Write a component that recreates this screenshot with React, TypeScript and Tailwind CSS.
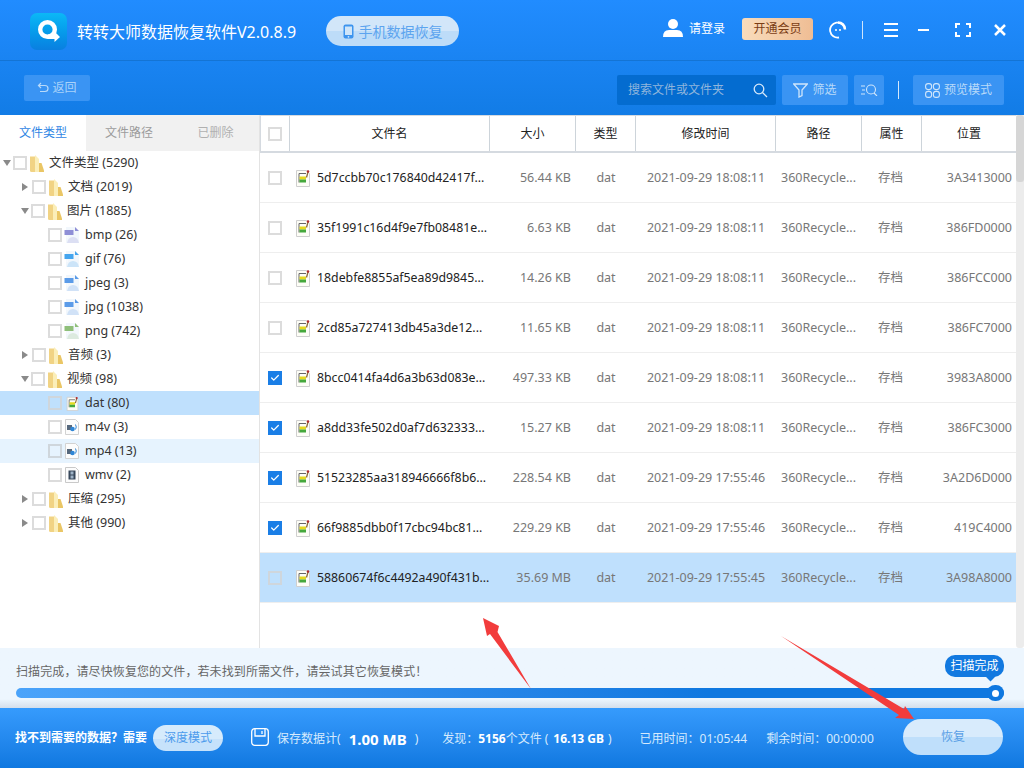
import { Check } from "lucide-react";

const SANS = "font-['Noto_Sans','Noto_Sans_CJK_SC',sans-serif]";

type TreeRow = {
  label: string;
  indent: number;
  kind: "folder" | "image" | "dat" | "video" | "film";
  open?: boolean;
  leaf?: boolean;
  tint?: string;
  row?: string;
};

const tree: TreeRow[] = [
  { label: "文件类型 (5290)", indent: 3, kind: "folder", open: true },
  { label: "文档 (2019)", indent: 21, kind: "folder" },
  { label: "图片 (1885)", indent: 21, kind: "folder", open: true },
  { label: "bmp (26)", indent: 48, kind: "image", leaf: true, tint: "#8f8fd6" },
  { label: "gif (76)", indent: 48, kind: "image", leaf: true, tint: "#45a5ee" },
  { label: "jpeg (3)", indent: 48, kind: "image", leaf: true, tint: "#5b9be8" },
  { label: "jpg (1038)", indent: 48, kind: "image", leaf: true, tint: "#5b9be8" },
  { label: "png (742)", indent: 48, kind: "image", leaf: true, tint: "#8fbf7a" },
  { label: "音频 (3)", indent: 21, kind: "folder" },
  { label: "视频 (98)", indent: 21, kind: "folder", open: true },
  { label: "dat (80)", indent: 48, kind: "dat", leaf: true, row: "bg-[#bfe0fd]" },
  { label: "m4v (3)", indent: 48, kind: "video", leaf: true },
  { label: "mp4 (13)", indent: 48, kind: "video", leaf: true, row: "bg-[#e6f3fe]" },
  { label: "wmv (2)", indent: 48, kind: "film", leaf: true },
  { label: "压缩 (295)", indent: 21, kind: "folder" },
  { label: "其他 (990)", indent: 21, kind: "folder" },
];

const files = [
  ["5d7ccbb70c176840d42417f...", "56.44 KB", "2021-09-29 18:08:11", "3A3413000", false],
  ["35f1991c16d4f9e7fb08481e...", "6.63 KB", "2021-09-29 18:08:11", "386FD0000", false],
  ["18debfe8855af5ea89d9845...", "14.26 KB", "2021-09-29 18:08:11", "386FCC000", false],
  ["2cd85a727413db45a3de12...", "11.65 KB", "2021-09-29 18:08:11", "386FC7000", false],
  ["8bcc0414fa4d6a3b63d083e...", "497.33 KB", "2021-09-29 18:08:11", "3983A8000", true],
  ["a8dd33fe502d0af7d632333...", "15.27 KB", "2021-09-29 18:08:11", "386FC3000", true],
  ["51523285aa318946666f8b6...", "228.54 KB", "2021-09-29 17:55:46", "3A2D6D000", true],
  ["66f9885dbb0f17cbc94bc81...", "229.29 KB", "2021-09-29 17:55:46", "419C4000", true],
  ["58860674f6c4492a490f431b...", "35.69 MB", "2021-09-29 17:55:45", "3A98A8000", false],
] as const;

function Box({ checked, dim }: { checked?: boolean; dim?: boolean }) {
  if (checked) {
    return (
      <span className="flex h-[14px] w-[14px] flex-shrink-0 items-center justify-center bg-[#1a7ee6]">
        <Check size={10} strokeWidth={3} className="text-white" />
      </span>
    );
  }
  return (
    <span
      className={`block h-[14px] w-[14px] flex-shrink-0 border-2 ${dim ? "border-[#cfd6dc] bg-transparent" : "border-[#dcdcdc] bg-white"}`}
    />
  );
}

function Folder() {
  return (
    <svg width="14" height="17" viewBox="0 0 14 17" className="flex-shrink-0">
      <path d="M0 1.500h5V17H1.500Q0 17 0 15.500Z" fill="#f1d384" />
      <path d="M5 0l4 4v13H5Z" fill="#fbeeb8" />
      <path d="M9 8h2.500L14 15.500V17H9Z" fill="#eac665" />
    </svg>
  );
}

function ImageFile({ tint }: { tint: string }) {
  return (
    <svg width="16" height="16" viewBox="0 0 16 16" className="flex-shrink-0">
      <path d="M2 0h9l4 4v12H2Z" fill="#f2f7fc" />
      <path d="M11 0l4 4h-4Z" fill={tint} />
      <rect x="0.500" y="3" width="9" height="5" fill={tint} />
      <path d="M2.500 9.500h1.500v1h-1.500Z" fill="#fff" />
      <path d="M3 16q1-6 6-6t6 6Z" fill={tint} opacity=".22" />
    </svg>
  );
}

function DatFile({ small }: { small?: boolean }) {
  return (
    <svg
      width={small ? 13 : 14}
      height={small ? 15 : 18}
      viewBox="0 0 14 18"
      className="flex-shrink-0"
    >
      <path d="M.500 1.500h10l3 3v13H.500Z" fill="#fdfdf6" stroke="#cfcfcf" />
      <path d="M3 4.500h7M3 4.500v9" stroke="#666" fill="none" />
      <rect x="3.500" y="7.500" width="6.500" height="3" fill="#e5da1f" />
      <rect x="3.500" y="10.500" width="6.500" height="3" fill="#45a83c" />
      <path d="M10.500 8.500L12 3" stroke="#8c6a3a" strokeWidth="1.300" />
      <circle cx="12" cy="2.500" r="1.300" fill="#b32a2a" />
    </svg>
  );
}

function VideoFile() {
  return (
    <svg width="14" height="16" viewBox="0 0 14 16" className="flex-shrink-0">
      <path d="M.500.500h10l3 3v12H.500Z" fill="#fcfcfc" stroke="#d2d2d2" />
      <rect x="2" y="6" width="5" height="5" fill="#56687c" />
      <circle cx="7.500" cy="10" r="2.300" fill="#2f86d6" />
      <path d="M10.500 5.500q1.500 2.500 0 5" stroke="#2f86d6" fill="none" />
    </svg>
  );
}

function FilmFile() {
  return (
    <svg width="14" height="16" viewBox="0 0 14 16" className="flex-shrink-0">
      <path d="M.500.500h10l3 3v12H.500Z" fill="#fcfcfc" stroke="#c9c9c9" />
      <rect x="3.500" y="3.500" width="7" height="9" fill="#37475a" />
      <rect x="5.500" y="4.500" width="3" height="3" fill="#9fb4c8" />
      <rect x="5.500" y="8.500" width="3" height="3" fill="#9fb4c8" />
    </svg>
  );
}

function RowIcon({ row }: { row: TreeRow }) {
  if (row.kind === "folder") return <Folder />;
  if (row.kind === "image") return <ImageFile tint={row.tint ?? "#5b9be8"} />;
  if (row.kind === "dat") return <DatFile small />;
  if (row.kind === "video") return <VideoFile />;
  return <FilmFile />;
}

function Logo() {
  return (
    <span className="mt-[2px] flex h-[37px] w-[37px] flex-shrink-0 items-center justify-center rounded-[7px] bg-gradient-to-b from-[#0cb8f6] to-[#0a7fe0]">
      <svg width="24" height="24" viewBox="0 0 24 24">
        <circle cx="10.500" cy="10.500" r="7.300" fill="none" stroke="#fff" strokeWidth="4.400" />
        <path d="M11 15.500h6.500V12.500L23 18l-5.500 5v-3H11Z" fill="#fff" />
      </svg>
    </span>
  );
}

function TitleBar() {
  return (
    <div className="flex h-[61px] items-center border-b border-b-[#1474d4] pl-[30px] pr-[18px]">
      <Logo />
      <span className="ml-[10px] mt-[4px] text-[16px] text-white">转转大师数据恢复软件V2.0.8.9</span>
      <span className="ml-[30px] mt-[2px] flex h-[30px] w-[133px] items-center justify-center gap-[5px] rounded-full bg-[linear-gradient(#d2e6f9_50%,#bddcf8_50%)] text-[14px] text-[#5ca4ef]">
        <svg width="11" height="15" viewBox="0 0 11 15">
          <rect x="0.500" y="0.500" width="10" height="14" rx="2" fill="#3d94ee" />
          <rect x="2" y="2.500" width="7" height="8.500" fill="#cfe5f9" />
          <circle cx="5.500" cy="12.800" r="0.900" fill="#cfe5f9" />
        </svg>
        手机数据恢复
      </span>
      <span className="flex-1" />
      <svg width="20" height="18" viewBox="0 0 20 18" className="mt-[-5px]">
        <circle cx="10" cy="5" r="5" fill="#fff" />
        <path d="M0 18q0-7 6-7h8q6 0 6 7Z" fill="#fff" />
      </svg>
      <span className="ml-[6px] mt-[-2px] text-[12px] text-white">请登录</span>
      <span className="ml-[17px] mt-[-2px] flex h-[22px] w-[71px] items-center justify-center rounded-[3px] bg-gradient-to-r from-[#f9dcbc] to-[#efbd94] text-[12px] text-[#7a3c14]">
        开通会员
      </span>
      <svg width="18" height="18" viewBox="0 0 18 18" fill="none" className="ml-[16px]">
        <path d="M16 8A7.500 7.500 0 1 0 10 16.500" stroke="#fff" strokeWidth="1.800" />
        <path d="M9 1.500c4 0 7 3 7 7" stroke="#fff" strokeWidth="2.500" />
        <circle cx="7" cy="9" r="1" fill="#fff" />
        <circle cx="11" cy="9" r="1" fill="#fff" />
      </svg>
      <span className="ml-[15px] h-[18px] w-px bg-[#cfe5fb]" />
      <span className="ml-[21px] flex w-[14px] flex-col gap-[4px]">
        <span className="h-[2px] bg-white" />
        <span className="h-[2px] bg-white" />
        <span className="h-[2px] bg-white" />
      </span>
      <span className="ml-[20px] h-[2px] w-[11px] bg-white" />
      <svg width="16" height="14" viewBox="0 0 16 14" fill="none" stroke="#fff" strokeWidth="2" className="ml-[26px]">
        <path d="M1 5V1h4M11 1h4v4M15 9v4h-4M5 13H1V9" />
      </svg>
      <svg width="12" height="12" viewBox="0 0 12 12" stroke="#fff" strokeWidth="2.500" className="ml-[23px]">
        <path d="M1 1l10 10M11 1L1 11" />
      </svg>
    </div>
  );
}

function Toolbar() {
  return (
    <div className="flex h-[54px] items-start pl-[24px] pr-[20px] pt-[14px]">
      <span className="flex h-[26px] w-[66px] items-center justify-center gap-[3px] rounded-[2px] bg-[#3a94f3] text-[12px] text-[#a9d2fa]">
        <svg width="12" height="12" viewBox="0 0 12 12" fill="none" stroke="#b9daf9" strokeWidth="1.200">
          <path d="M4 1L1.500 3.500 4 6M2 3.500h6a3 3 0 0 1 0 6H3" />
        </svg>
        返回
      </span>
      <span className="flex-1" />
      <span className="flex h-[30px] w-[159px] items-center justify-between rounded-[2px] bg-[#046cd0] pl-[11px] pr-[8px] text-[12px] text-[#8fb5dc]">
        搜索文件或文件夹
        <svg width="15" height="15" viewBox="0 0 15 15" fill="none" stroke="#d7e9fb" strokeWidth="1.300">
          <circle cx="6" cy="6" r="4.800" />
          <path d="M9.500 9.500L14 14" />
        </svg>
      </span>
      <span className="ml-[6px] flex h-[30px] w-[66px] items-center justify-center gap-[4px] rounded-[2px] bg-[#3a94f3] text-[12px] text-[#b9daf9]">
        <svg width="15" height="15" viewBox="0 0 15 15" fill="none" stroke="#cfe5fb" strokeWidth="1.300">
          <path d="M.700 1h13.600L9 7v5.500L6 14V7Z" />
        </svg>
        筛选
      </span>
      <span className="ml-[6px] flex h-[30px] w-[30px] items-center justify-center rounded-[2px] bg-[#3a94f3]">
        <svg width="17" height="12" viewBox="0 0 17 12" fill="none" stroke="#cfe5fb" strokeWidth="1.100">
          <path d="M0 2h4M1 6h3M0 10h4" />
          <circle cx="10" cy="5.500" r="4.500" />
          <path d="M13 9l3 3" />
        </svg>
      </span>
      <span className="ml-[14px] mt-[6px] h-[18px] w-px bg-[#d4e8fc]" />
      <span className="ml-[14px] flex h-[30px] w-[91px] items-center justify-center gap-[4px] rounded-[2px] bg-[#3a94f3] text-[12px] text-[#b9daf9]">
        <svg width="15" height="15" viewBox="0 0 15 15" fill="none" stroke="#cfe5fb" strokeWidth="1.100">
          <rect x="0.600" y="0.600" width="6" height="6" rx="2.500" />
          <rect x="8.400" y="0.600" width="6" height="6" rx="2.500" />
          <rect x="0.600" y="8.400" width="6" height="6" rx="2.500" />
          <rect x="8.400" y="8.400" width="6" height="6" rx="2.500" />
        </svg>
        预览模式
      </span>
    </div>
  );
}

function Sidebar() {
  return (
    <div className="w-[260px] flex-shrink-0 border-r border-r-[#e3e3e3] bg-white">
      <div className="flex h-[36px] text-[12px]">
        <span className="flex w-[86px] items-center justify-center text-[#2f86e4]">文件类型</span>
        <span className="flex w-[86px] items-center justify-center bg-[#f1f1f1] text-[#9c9c9c]">文件路径</span>
        <span className="flex w-[87px] items-center justify-center bg-[#f1f1f1] text-[#b0b0b0]">已删除</span>
      </div>
      {tree.map((row) => (
        <div key={row.label} className={`flex h-[24px] items-center ${row.row ?? ""}`} style={{ paddingLeft: row.indent }}>
          {!row.leaf &&
            (row.open ? (
              <span className="h-0 w-0 border-x-[4.500px] border-t-[6px] border-x-transparent border-t-[#8a8a8a]" />
            ) : (
              <span className="ml-[1px] mr-[2px] h-0 w-0 border-y-[4.500px] border-l-[6px] border-y-transparent border-l-[#8a8a8a]" />
            ))}
          <span className={row.leaf ? "" : "ml-[2px]"}>
            <Box dim={!!row.row} />
          </span>
          <span className={`flex justify-center ${row.leaf ? "ml-[2px] w-[16px]" : "ml-[3px] w-[14px]"}`}>
            <RowIcon row={row} />
          </span>
          <span className="ml-[5px] text-[12.500px] text-[#333]">{row.label}</span>
        </div>
      ))}
    </div>
  );
}

const headCell = "flex items-center justify-center border-r border-r-[#cdd4da] text-[12px] text-[#222]";

function FileTable() {
  return (
    <div className="flex min-w-0 flex-1">
      <div className="min-w-0 flex-1">
        <div className="flex h-[38px] border-b-2 border-l border-t border-[#d5dae0] bg-white">
          <div className={`${headCell} w-[29px]`}>
            <Box />
          </div>
          <div className={`${headCell} w-[200px]`}>文件名</div>
          <div className={`${headCell} w-[86px]`}>大小</div>
          <div className={`${headCell} w-[60px]`}>类型</div>
          <div className={`${headCell} w-[140px]`}>修改时间</div>
          <div className={`${headCell} w-[86px]`}>路径</div>
          <div className={`${headCell} w-[60px]`}>属性</div>
          <div className={`${headCell} flex-1 border-r-0`}>位置</div>
        </div>
        {files.map(([name, size, date, pos, checked], i) => {
          const active = i === files.length - 1;
          return (
            <div
              key={name}
              className={`flex h-[50px] items-center border-b border-b-[#eeeeee] text-[12.500px] text-[#777] ${active ? "bg-[#bfe0fd]" : "bg-white"}`}
            >
              <div className="flex w-[30px] justify-center">
                <Box checked={checked} dim={active} />
              </div>
              <div className="flex w-[200px] items-center pl-[6px]">
                <DatFile />
                <span className="ml-[7px] pt-[2px] text-[12.300px] text-[#222]">{name}</span>
              </div>
              <div className="w-[86px] pr-[5px] pt-[2px] text-right">{size}</div>
              <div className="w-[60px] pt-[2px] text-center">dat</div>
              <div className="w-[140px] pt-[2px] text-center">{date}</div>
              <div className="w-[86px] pl-[5px] pt-[2px]">360Recycle...</div>
              <div className="w-[60px] pr-[3px] pt-[2px] text-center">存档</div>
              <div className="flex-1 pr-[4px] pt-[2px] text-right">{pos}</div>
            </div>
          );
        })}
      </div>
      <div className="w-[8px] flex-shrink-0 rounded-b-[3px] bg-[#ececec]">
        <div className="h-[67px] rounded-[3px] bg-[#d6d6d6]" />
      </div>
    </div>
  );
}

function ScanBar() {
  return (
    <div className="relative h-[60px] bg-gradient-to-b from-[#edf6fe] from-85% to-[#d5dfeb] pl-[16px] pr-[20px] pt-[15px]">
      <p className="pt-[1px] text-[12px] leading-[16px] tracking-[0.1px] text-[#666]">
        扫描完成，请尽快恢复您的文件，若未找到所需文件，请尝试其它恢复模式！
      </p>
      <div className="relative mt-[8px] h-[10px] rounded-[5px] bg-gradient-to-r from-[#4aa3fa] to-[#0f78e0] to-70%">
        <span className="absolute right-0 top-[-3px] flex h-[16px] w-[17px] items-center justify-center rounded-full bg-[#0f78e0]">
          <span className="h-[7px] w-[7px] rounded-full bg-white" />
        </span>
        <span className="absolute right-0 top-[-33px] flex h-[22px] w-[59px] items-center justify-center rounded-[10px] bg-[#1279e0] text-[12px] text-white">
          扫描完成
          <span className="absolute bottom-[-3px] right-[10px] h-[7px] w-[7px] rotate-45 bg-[#1279e0]" />
        </span>
      </div>
    </div>
  );
}

function Footer() {
  return (
    <div className="flex h-[60px] items-center bg-gradient-to-b from-[#369bfd] to-[#0f78e0] pl-[15px] text-[12px] text-white">
      <span className="font-bold">找不到需要的数据？需要</span>
      <span className="ml-[6px] flex h-[26px] w-[70px] items-center justify-center rounded-full bg-[linear-gradient(#d6ebfc_55%,#c6e2fb_55%)] text-[#4c9bec]">
        深度模式
      </span>
      <svg width="18" height="18" viewBox="0 0 18 18" fill="none" stroke="#fff" strokeWidth="1.300" className="ml-[28px] mt-[-2px]">
        <rect x="0.700" y="0.700" width="16.600" height="16.600" rx="3" />
        <path d="M4 1v7h10V1M11 3v3" />
      </svg>
      <div className="flex items-center pt-[2px] text-[#d6eafd]">
        <span className="ml-[8px]">保存数据计</span>
        <span>(</span>
        <span className="ml-[8px] text-[15px] font-bold text-white">1.00 MB</span>
        <span className="ml-[8px]">)</span>
        <span className="ml-[24px]">发现：</span>
        <b className="text-white">5156</b>
        <span>个文件</span>
        <span className="ml-[3px]">(</span>
        <b className="ml-[5px] text-white">16.13 GB</b>
        <span className="ml-[4px]">)</span>
        <span className="ml-[28px]">已用时间：01:05:44</span>
        <span className="ml-[19px]">剩余时间：00:00:00</span>
      </div>
      <span className="flex-1" />
      <span className="mb-[2px] mr-[21px] flex h-[36px] w-[100px] items-center justify-center rounded-full bg-[linear-gradient(#d8ebfc_50%,#bfdffb_50%)] text-[#5a9fe6]">
        恢复
      </span>
    </div>
  );
}

function Arrows() {
  return (
    <svg width="1024" height="768" viewBox="0 0 1024 768" className="pointer-events-none absolute left-0 top-0">
      <path d="M483 618L499 626 497.500 632 531 689 490 634 487 636Z" fill="#f23c3c" />
      <path d="M781 636L904 709 905 706 914 719 895 718 899 715Z" fill="#f23c3c" />
    </svg>
  );
}

export default function App() {
  return (
    <div className={`relative flex h-[768px] w-[1024px] flex-col overflow-hidden bg-white ${SANS}`}>
      <div className="bg-gradient-to-b from-[#218cff] to-[#127ce6]">
        <TitleBar />
        <Toolbar />
      </div>
      <div className="flex h-[533px] min-h-0">
        <Sidebar />
        <FileTable />
      </div>
      <ScanBar />
      <Footer />
      <Arrows />
    </div>
  );
}
